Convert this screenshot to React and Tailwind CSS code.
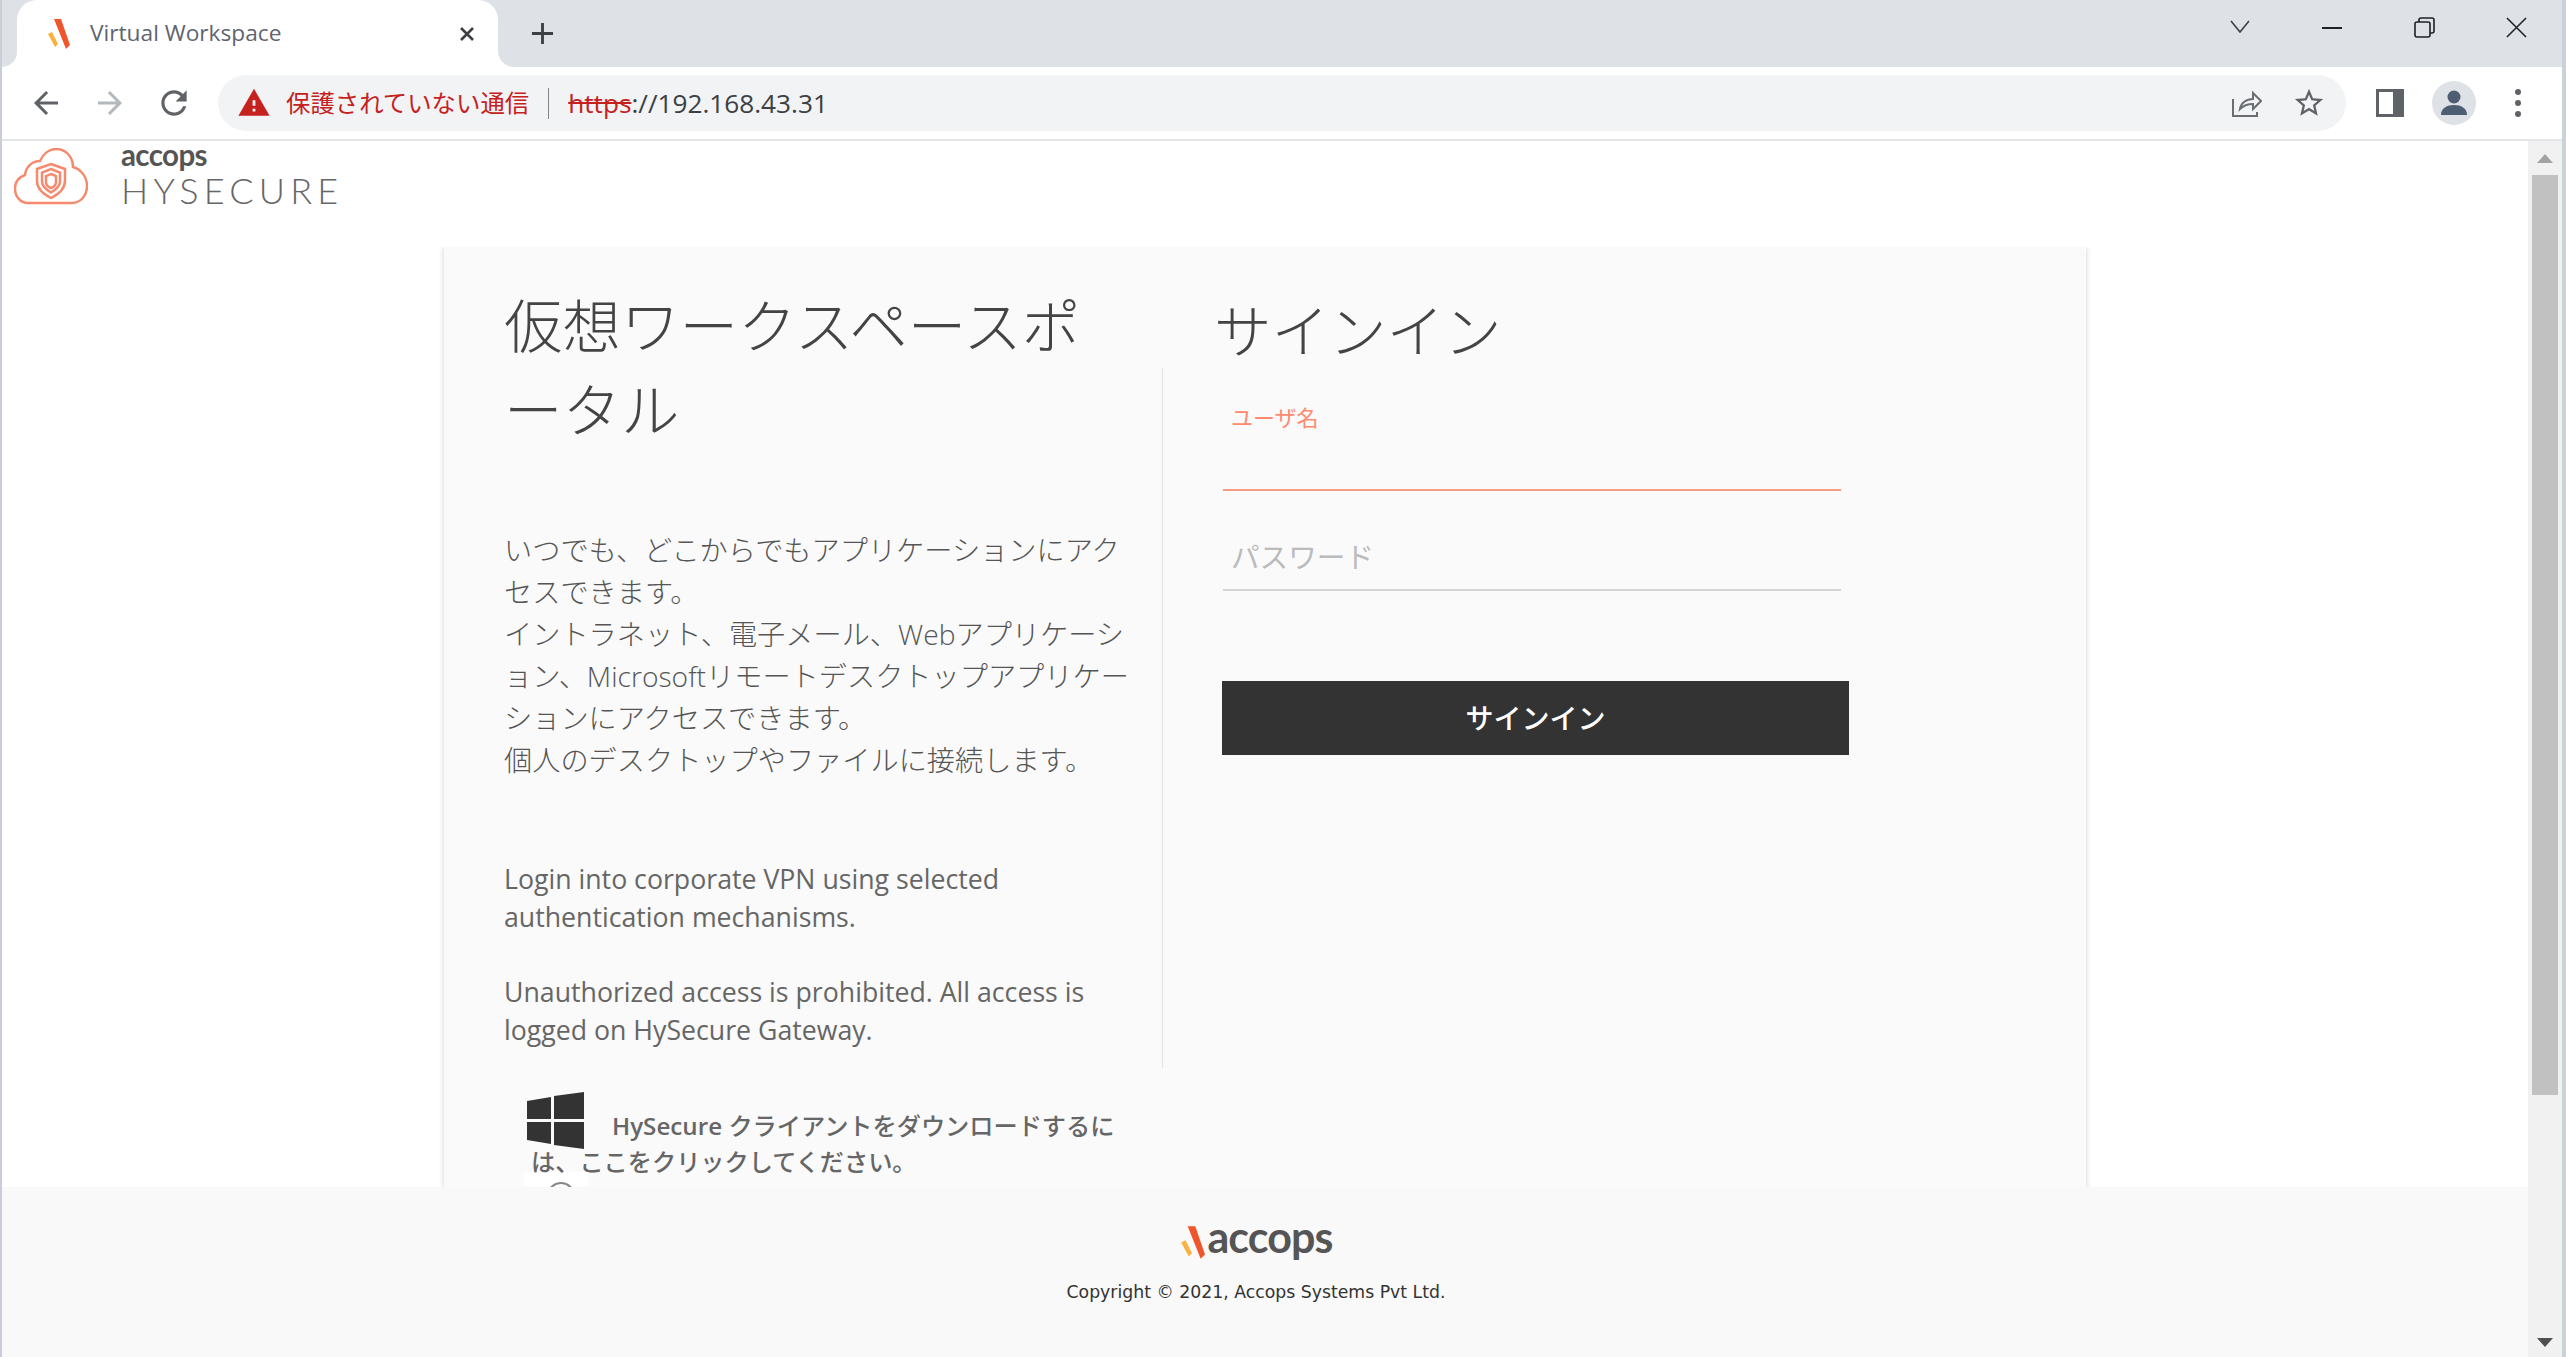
const sans = "font-['Open_Sans','Noto_Sans_CJK_JP',sans-serif]";

function AccopsMark({ className }) {
  return (
    <svg viewBox="0 0 24 30" className={className}>
      <path d="M8 0h7l9 26-4 4z" fill="#f0562c" />
      <path d="M2 15l4-2 6 12-3 3z" fill="#f9b13f" />
    </svg>
  );
}

function Glyph({ d, className, fill = "#5f6368" }) {
  return (
    <svg viewBox="0 0 24 24" className={className} fill={fill}>
      <path d={d} />
    </svg>
  );
}

function TabStrip() {
  return (
    <div className="flex h-[67px] shrink-0 bg-[#dee1e6]">
      <div className="h-full w-[15px] bg-white">
        <div className="h-full rounded-br-[16px] bg-[#dee1e6]" />
      </div>
      <div className="flex h-full w-[481px] items-center rounded-t-[20px] bg-white pl-[29px]">
        <AccopsMark className="h-[30px] w-[24px]" />
        <span className="ml-[20px] w-[369px] text-[22.7px] text-[#5f6470]">Virtual Workspace</span>
        <svg viewBox="0 0 16 16" className="h-[16px] w-[16px]" stroke="#3c4043" strokeWidth="2.6">
          <path d="M2 2l12 12M14 2L2 14" />
        </svg>
      </div>
      <div className="h-full w-[17px] bg-white">
        <div className="h-full rounded-bl-[16px] bg-[#dee1e6]" />
      </div>
      <svg viewBox="0 0 24 24" className="ml-[16px] mt-[22px] h-[23px] w-[23px]" stroke="#3c4043" strokeWidth="3">
        <path d="M12 1v22M1 12h22" />
      </svg>
      <div className="ml-auto flex">
        <div className="flex w-[92px] justify-center pt-[20px]">
          <svg viewBox="0 0 20 13" className="h-[13px] w-[20px]" fill="none" stroke="#3c4043" strokeWidth="1.6">
            <path d="M1 1l9 11 9-11" />
          </svg>
        </div>
        <div className="flex w-[92px] justify-center pt-[27px]">
          <div className="h-[2px] w-[20px] bg-[#202124]" />
        </div>
        <div className="flex w-[92px] justify-center pt-[17px]">
          <svg viewBox="0 0 21 21" className="h-[21px] w-[21px]" fill="none" stroke="#202124" strokeWidth="1.6">
            <rect x="1" y="5" width="15" height="15" rx="2" />
            <path d="M5 5V3a2 2 0 0 1 2-2h11a2 2 0 0 1 2 2v11a2 2 0 0 1-2 2h-2" />
          </svg>
        </div>
        <div className="flex w-[92px] justify-center pt-[17px]">
          <svg viewBox="0 0 22 22" className="h-[21px] w-[21px]" stroke="#202124" strokeWidth="1.6">
            <path d="M1 1l20 20M21 1L1 21" />
          </svg>
        </div>
      </div>
    </div>
  );
}

function Toolbar() {
  return (
    <div className="flex h-[74px] shrink-0 border-b-2 border-[#e3e5e8] bg-white pl-3 pr-3">
      <div className="flex w-[64px] items-center justify-center">
        <Glyph className="h-[36px] w-[36px]" d="M20 11H7.83l5.59-5.59L12 4l-8 8 8 8 1.41-1.41L7.83 13H20v-2z" />
      </div>
      <div className="flex w-[64px] items-center justify-center">
        <Glyph className="h-[36px] w-[36px]" fill="#b4b7bb" d="M12 4l-1.41 1.41L16.17 11H4v2h12.17l-5.58 5.59L12 20l8-8z" />
      </div>
      <div className="flex w-[64px] items-center justify-center">
        <Glyph className="h-[38px] w-[38px]" d="M17.65 6.35C16.2 4.9 14.21 4 12 4c-4.42 0-7.99 3.58-7.99 8s3.57 8 7.99 8c3.73 0 6.84-2.55 7.73-6h-2.08c-.82 2.33-3.04 4-5.65 4-3.31 0-6-2.69-6-6s2.69-6 6-6c1.66 0 3.14.69 4.22 1.78L13 11h7V4l-2.35 2.35z" />
      </div>
      <div className="ml-3 mr-3 mt-2 flex h-[56px] flex-1 items-center rounded-full bg-[#f1f3f4] pl-[19px] pr-[20px]">
        <Glyph className="h-[34px] w-[34px]" fill="#c5221f" d="M1 21h22L12 2 1 21zm12-3h-2v-2h2v2zm0-4h-2v-4h2v4z" />
        <span className="ml-[15px] text-[24.4px] leading-none text-[#c5221f]">保護されていない通信</span>
        <div className="ml-[19px] h-[31px] w-px bg-[#80868b]" />
        <span className="ml-[19px] text-[26.2px] leading-none text-[#c5221f] line-through">https</span>
        <span className="text-[26.2px] leading-none text-[#3c4043]">://192.168.43.31</span>
        <svg viewBox="0 0 30 28" className="ml-auto h-[28px] w-[30px]" fill="none" stroke="#6b6f73" strokeWidth="2">
          <path d="M1 10v17h24v-4M8 20c1-6 6-10 13-10V4l8 8-8 8v-5c-5 0-9 1-13 5z" />
        </svg>
        <Glyph className="ml-[30px] h-[34px] w-[34px]" d="M22 9.24l-7.19-.62L12 2 9.19 8.63 2 9.24l5.46 4.73L5.82 21 12 17.27 18.18 21l-1.63-7.03L22 9.24zM12 15.4l-3.76 2.27 1-4.28-3.32-2.88 4.38-.38L12 6.1l1.71 4.04 4.38.38-3.32 2.88 1 4.28L12 15.4z" />
      </div>
      <div className="flex w-[64px] items-center justify-center">
        <div className="flex h-[28px] w-[28px] border-[3px] border-[#5f6368] bg-white">
          <div className="ml-auto h-full w-[8px] bg-[#5f6368]" />
        </div>
      </div>
      <div className="flex w-[64px] items-center justify-center">
        <div className="flex h-[44px] w-[44px] items-center justify-center rounded-full bg-[#dee1e6]">
          <svg viewBox="0 0 26 26" className="h-[26px] w-[26px]" fill="#4f5d73">
            <circle cx="13" cy="7" r="6.5" />
            <path d="M0 25c0-7 6-10 13-10s13 3 13 10z" />
          </svg>
        </div>
      </div>
      <div className="flex w-[64px] flex-col items-center justify-center gap-[5px]">
        <div className="h-[6px] w-[6px] rounded-full bg-[#5f6368]" />
        <div className="h-[6px] w-[6px] rounded-full bg-[#5f6368]" />
        <div className="h-[6px] w-[6px] rounded-full bg-[#5f6368]" />
      </div>
    </div>
  );
}

function Brand() {
  return (
    <div className="flex h-[106px] shrink-0 items-start pl-[12px] pt-[7px]">
      <svg viewBox="0 0 74 57" className="h-[57px] w-[74px]" fill="none" stroke="#f58a6e" strokeWidth="2.5">
        <path d="M14 55C6 55 1 48 1 41c0-7 4-12 10-14 1-9 8-14 15-14 3-7 9-12 16-12 10 0 17 8 17 18 8 2 14 10 14 19 0 10-7 17-15 17z" />
        <path d="M37 16l14 5v12c0 8-6 13-14 17-8-4-14-9-14-17V21z" />
        <path d="M37 21l9 3.500v9c0 5-4 8-9 11-5-3-9-6-9-11v-9z" />
        <path d="M37 26l5 2v6c0 3-2 5-5 6-3-1-5-3-5-6v-6z" />
      </svg>
      <div className="-mt-[5px] ml-[33px] flex flex-col">
        <span className="h-[32px] text-[29.5px] font-bold leading-[24px] tracking-[-0.6px] text-[#555] font-['Lato',sans-serif]">accops</span>
        <span className="text-[36px] font-light leading-[30px] tracking-[5.2px] text-[#666] font-['Lato',sans-serif]">HYSECURE</span>
      </div>
    </div>
  );
}

function LeftColumn() {
  return (
    <div className="w-[718px] shrink-0 pl-[60px] pt-[36px] text-[#666]">
      <h1 className="whitespace-nowrap text-[58.5px] font-light leading-[84px] text-[#444]">
        仮想ワークスペースポ
        <br />
        ータル
      </h1>
      <p className="mt-[78px] whitespace-nowrap text-[28.2px] font-light leading-[42px] text-[#555]">
        いつでも、どこからでもアプリケーションにアク
        <br />
        セスできます。
        <br />
        イントラネット、電子メール、Webアプリケーシ
        <br />
        ョン、Microsoftリモートデスクトップアプリケー
        <br />
        ションにアクセスできます。
        <br />
        個人のデスクトップやファイルに接続します。
      </p>
      <p className="mt-[79px] whitespace-nowrap text-[26.7px] leading-[38px]">
        Login into corporate VPN using selected
        <br />
        authentication mechanisms.
      </p>
      <p className="mt-[37px] whitespace-nowrap text-[26.7px] leading-[38px]">
        Unauthorized access is prohibited. All access is
        <br />
        logged on HySecure Gateway.
      </p>
      <div className="ml-[23px] mt-[43px] flex items-start">
        <svg viewBox="0 0 57 57" className="h-[57px] w-[57px] shrink-0" fill="#333">
          <path d="M0 9l24-4v22H0zM27 4l30-4v27H27zM0 30h24v22L0 48zM27 30h30v27l-30-4z" />
        </svg>
        <span className="ml-[28px] whitespace-nowrap pt-[16px] text-[24.2px] font-medium leading-[36px]">
          <span className="font-semibold">HySecure</span> クライアントをダウンロードするに
        </span>
      </div>
      <p className="-mt-[5px] ml-[27px] whitespace-nowrap text-[24.2px] font-medium leading-[36px]">は、ここをクリックしてください。</p>
      <div className="-mt-[8px] ml-[20px] flex h-[60px] w-[64px] justify-center bg-white pt-[10px]">
        <div className="ml-[10px] h-[28px] w-[28px] rounded-full border-2 border-[#888]" />
      </div>
    </div>
  );
}

function RightColumn() {
  return (
    <div className="flex-1 pl-[51px] pt-[42px] text-[#444]">
      <h2 className="text-[57.5px] font-light leading-[84px]">サインイン</h2>
      <div className="ml-[9px] mt-[29px] w-[618px]">
        <label className="block pl-2 text-[22px] leading-[30px] text-[#ff8a70]">ユーザ名</label>
        <input className="block h-[59px] w-full border-b-2 border-[#f79b85] bg-transparent outline-none" />
        <input
          placeholder="パスワード"
          className="mt-[45px] block h-[55px] w-full border-b-2 border-[#d4d4d4] bg-transparent pb-[13px] pl-2 text-[28.6px] leading-[40px] outline-none placeholder:text-[#bbb]"
        />
      </div>
      <button className="ml-[8px] mt-[90px] flex h-[74px] w-[627px] items-center justify-center bg-[#333] text-[28px] font-medium text-white">
        サインイン
      </button>
    </div>
  );
}

function Footer() {
  return (
    <div className="flex h-[170px] shrink-0 flex-col items-center bg-[#f9f9f9] pr-[18px] pt-[32px]">
      <div className="flex h-[35px] items-center">
        <AccopsMark className="mt-[12px] h-[33px] w-[26px]" />
        <span className="ml-[2px] text-[43px] font-bold leading-[35px] tracking-[-0.9px] text-[#555] font-['Lato',sans-serif]">accops</span>
      </div>
      <p className="mt-[28px] text-[17.3px] leading-[20px] text-[#333] font-['DejaVu_Sans',sans-serif]">Copyright © 2021, Accops Systems Pvt Ltd.</p>
    </div>
  );
}

export default function App() {
  return (
    <div className={`flex h-screen flex-col overflow-hidden border-l-2 border-r-4 border-l-[#c9ced6] border-r-[#ccd1d9] bg-white ${sans}`}>
      <TabStrip />
      <Toolbar />
      <div className="flex min-h-0 flex-1">
        <div className="flex min-w-0 flex-1 flex-col">
          <Brand />
          <div className="min-h-0 flex-1 overflow-hidden">
            <div className="mx-auto flex h-[1100px] w-[1642px] bg-[#fafafa] shadow-[0_0_6px_rgba(0,0,0,0.18)]">
              <LeftColumn />
              <div className="mt-[121px] h-[700px] w-px shrink-0 bg-[#e2e2e2]" />
              <RightColumn />
            </div>
          </div>
          <Footer />
        </div>
        <div className="flex w-[34px] shrink-0 flex-col items-center bg-[#f1f1f1]">
          <div className="mt-[13px] h-0 w-0 border-x-[8px] border-b-[9px] border-x-transparent border-b-[#a3a3a3]" />
          <div className="mt-[12px] h-[920px] w-[26px] bg-[#c1c1c1]" />
          <div className="mb-[10px] mt-auto h-0 w-0 border-x-[8px] border-t-[9px] border-x-transparent border-t-[#505050]" />
        </div>
      </div>
    </div>
  );
}
